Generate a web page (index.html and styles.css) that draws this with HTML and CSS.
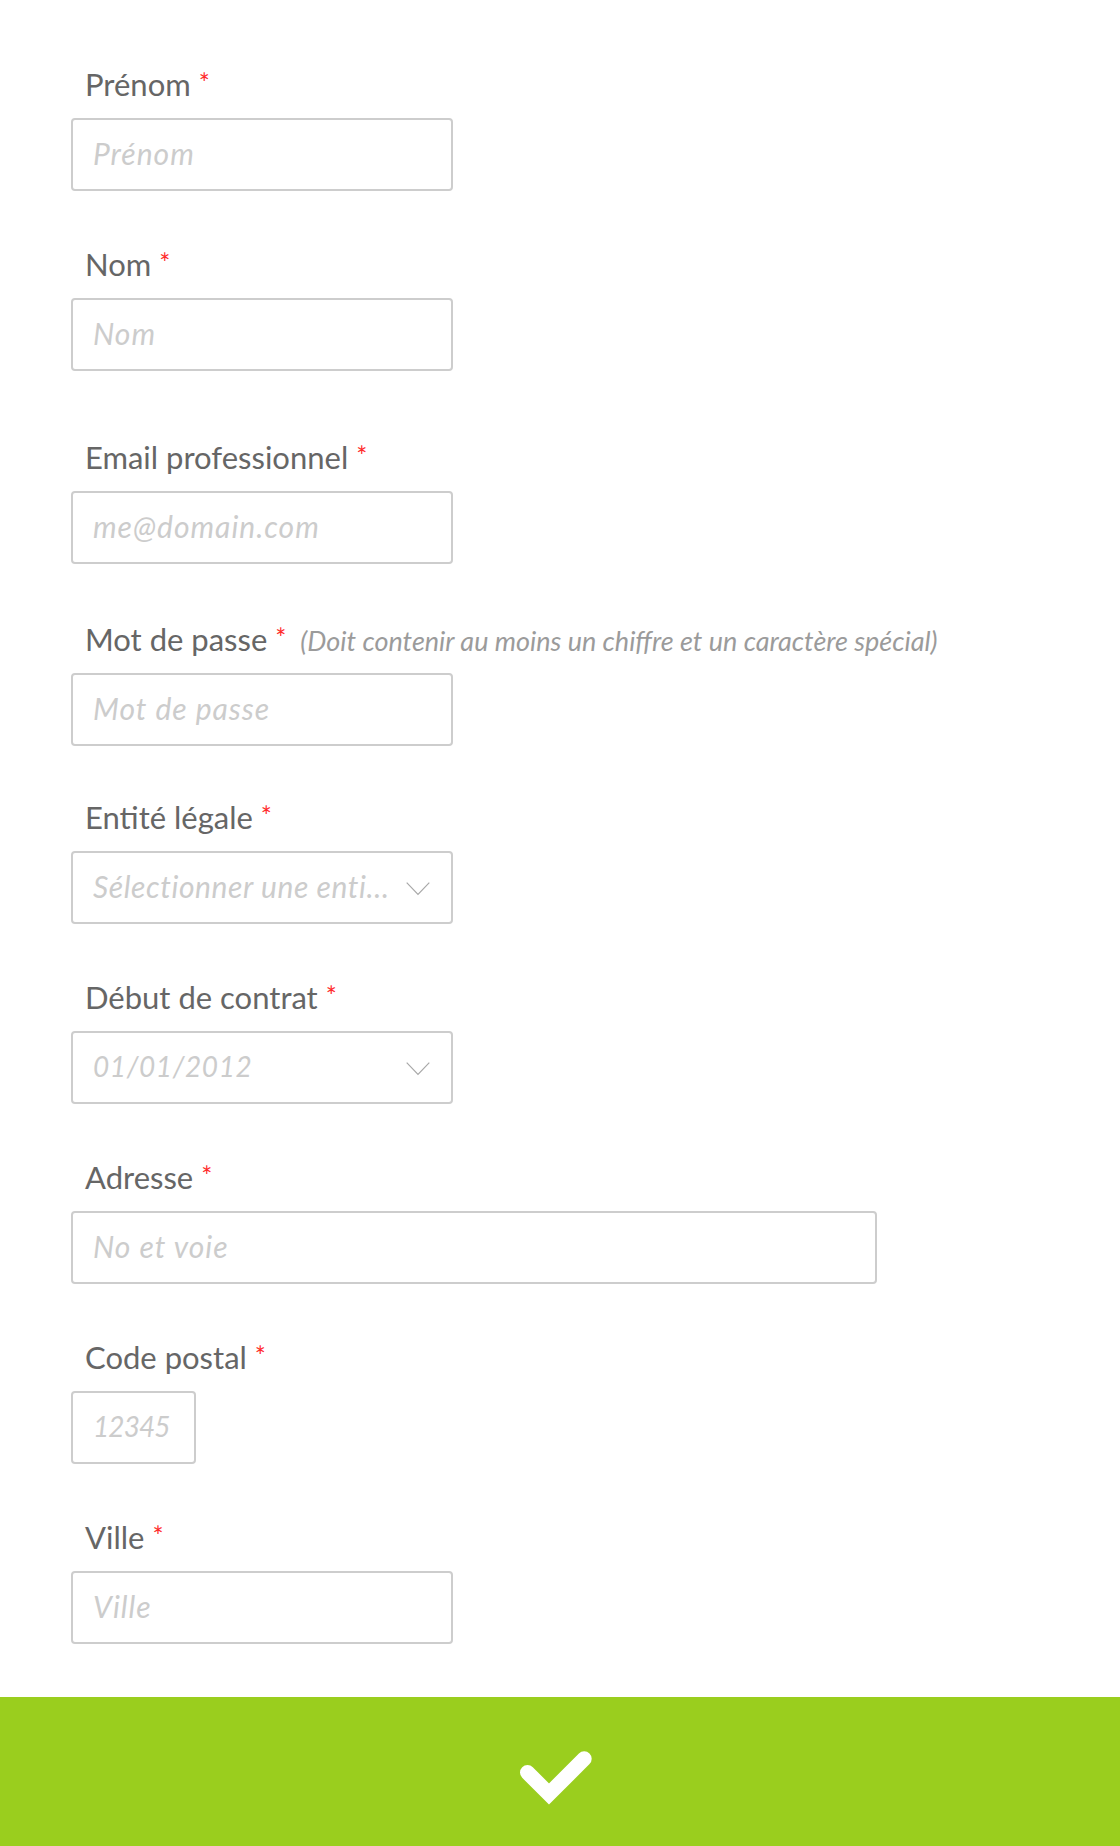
FILE: index.html
```html
<!DOCTYPE html>
<html lang="fr">
<head>
<meta charset="utf-8">
<title>Inscription</title>
<link rel="stylesheet" href="styles.css">
</head>
<body>
<div class="page">
  <form class="form">
    <div class="field">
      <label class="label">Prénom <span class="req">*</span></label>
      <input class="input" type="text" placeholder="Prénom">
    </div>
    <div class="field">
      <label class="label">Nom <span class="req">*</span></label>
      <input class="input" type="text" placeholder="Nom">
    </div>
    <div class="field field-email">
      <label class="label">Email professionnel <span class="req">*</span></label>
      <input class="input" type="email" placeholder="me@domain.com">
    </div>
    <div class="field field-pass">
      <label class="label">Mot de passe <span class="req">*</span><span class="hint">(Doit contenir au moins un chiffre et un caractère spécial)</span></label>
      <input class="input" type="password" placeholder="Mot de passe">
    </div>
    <div class="field field-entity">
      <label class="label">Entité légale <span class="req">*</span></label>
      <div class="input select">
        <span class="select-text">Sélectionner une enti…</span>
        <svg class="chevron" width="24" height="14" viewBox="0 0 24 14"><polyline points="0.7,0.7 12,12.3 23.3,0.7" fill="none" stroke="#a8a8a8" stroke-width="1.2"/></svg>
      </div>
    </div>
    <div class="field">
      <label class="label">Début de contrat <span class="req">*</span></label>
      <div class="input select">
        <span class="select-text digits">01/01/2012</span>
        <svg class="chevron" width="24" height="14" viewBox="0 0 24 14"><polyline points="0.7,0.7 12,12.3 23.3,0.7" fill="none" stroke="#a8a8a8" stroke-width="1.2"/></svg>
      </div>
    </div>
    <div class="field">
      <label class="label">Adresse <span class="req">*</span></label>
      <input class="input input-wide" type="text" placeholder="No et voie">
    </div>
    <div class="field">
      <label class="label">Code postal <span class="req">*</span></label>
      <input class="input input-small digits" type="text" placeholder="12345">
    </div>
    <div class="field">
      <label class="label">Ville <span class="req">*</span></label>
      <input class="input" type="text" placeholder="Ville">
    </div>
  </form>
  <button class="submit" type="button" aria-label="Valider">
    <svg width="80" height="60" viewBox="0 0 80 60"><polyline points="11.5,24.5 33,46 68.2,10.8" fill="none" stroke="#ffffff" stroke-width="15" stroke-linecap="round" stroke-linejoin="miter"/></svg>
  </button>
</div>
</body>
</html>
```

FILE: styles.css
```css
html, body {
  margin: 0;
  padding: 0;
  background: #ffffff;
}

body {
  font-family: Lato, "Liberation Sans", sans-serif;
  color: #666666;
}

.page {
  height: 1846px;
  display: flex;
  flex-direction: column;
}

.form {
  flex: 1;
  padding: 66px 0 0 71px;
  display: flex;
  flex-direction: column;
  gap: 55px;
}

.field {
  display: flex;
  flex-direction: column;
  align-items: flex-start;
}

.field-email {
  margin-top: 13px;
}

.field-pass {
  margin-top: 2px;
}

.field-entity {
  margin-top: -2px;
}

.label {
  display: block;
  height: 34px;
  line-height: 34px;
  margin-bottom: 18px;
  padding-left: 14px;
  font-size: 31px;
  color: #666666;
  white-space: nowrap;
}

.req {
  color: #ff2a2a;
  font-size: 26px;
  vertical-align: 3px;
}

.hint {
  margin-left: 14px;
  font-size: 27px;
  font-style: italic;
  color: #9b9b9b;
}

.input {
  box-sizing: border-box;
  width: 382px;
  height: 73px;
  margin: 0;
  padding: 0 20px 4px;
  border: 2px solid #cdcdcd;
  border-radius: 4px;
  background: #ffffff;
  font-family: Lato, "Liberation Sans", sans-serif;
  font-size: 30px;
  letter-spacing: 1px;
  color: #666666;
  outline: none;
}

.input::placeholder {
  color: #cccccc;
  font-style: italic;
  opacity: 1;
}

.input-wide {
  width: 806px;
}

.input-small {
  width: 125px;
}

.digits {
  font-size: 28px;
  letter-spacing: -0.9px;
}

.select {
  display: flex;
  align-items: center;
  padding-right: 21px;
}

.select-text {
  flex: 1;
  min-width: 0;
  overflow: hidden;
  white-space: nowrap;
  text-overflow: ellipsis;
  font-style: italic;
  letter-spacing: 0.6px;
  color: #cccccc;
}

.chevron {
  flex: none;
  margin-left: 10px;
  margin-top: 6px;
}

.submit {
  flex: none;
  height: 149px;
  width: 100%;
  margin: 0;
  padding: 0;
  border: none;
  background: #9ace1e;
  display: flex;
  align-items: center;
  justify-content: center;
  cursor: pointer;
}

.submit svg {
  display: block;
  margin: 12px 0 0 -8px;
}
```
